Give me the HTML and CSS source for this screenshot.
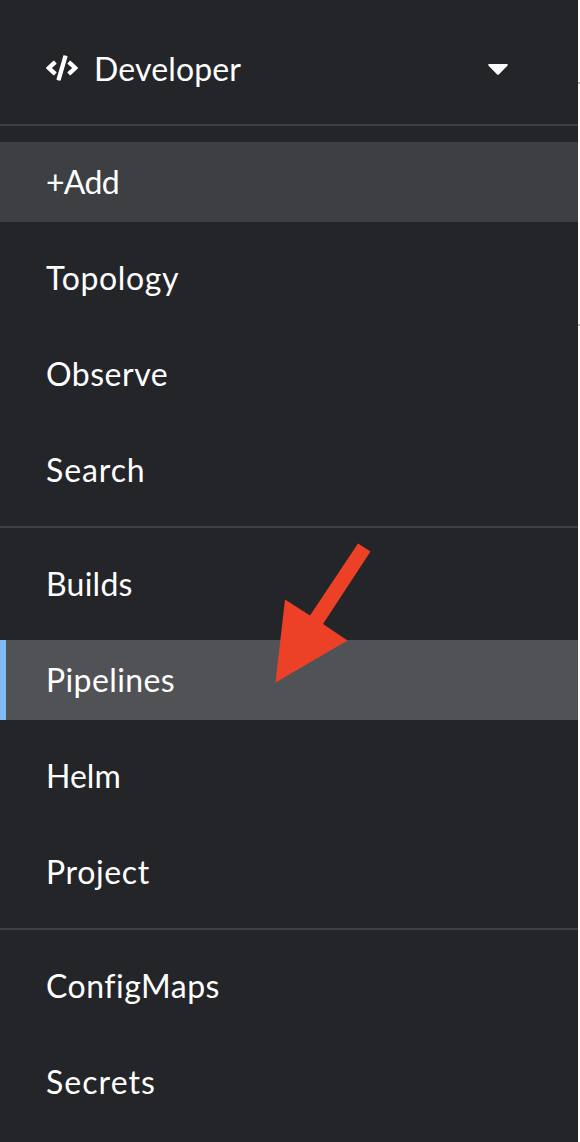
FILE: index.html
```html
<!DOCTYPE html>
<html lang="en">
<head>
<meta charset="utf-8">
<title>Developer navigation</title>
<link rel="stylesheet" href="styles.css">
</head>
<body>
<div class="page">
  <nav class="sidebar">
    <button class="perspective" type="button">
      <svg class="code-icon" viewBox="0 0 640 512"><path fill="currentColor" d="M278.900 511.500l-61-17.700c-6.400-1.800-10-8.500-8.200-14.900L346.200 8.700c1.800-6.400 8.500-10 14.900-8.200l61 17.700c6.400 1.800 10 8.500 8.200 14.900L293.800 503.300c-1.900 6.400-8.500 10.100-14.900 8.200zm-114-112.200l43.500-46.400c4.600-4.900 4.300-12.700-.8-17.200L117 256l90.600-79.700c5.100-4.500 5.500-12.300.8-17.200l-43.500-46.400c-4.500-4.800-12.100-5.100-17-.5L3.800 247.200c-5.100 4.700-5.100 12.800 0 17.500l144.100 135.100c4.900 4.600 12.500 4.400 17-.5zm327.200.6l144.100-135.100c5.100-4.700 5.100-12.800 0-17.500L492.100 112.100c-4.800-4.500-12.400-4.300-17 .5L431.600 159c-4.600 4.900-4.300 12.700.8 17.200L523 256l-90.600 79.700c-5.100 4.500-5.500 12.300-.8 17.200l43.500 46.400c4.500 4.900 12.100 5.100 17 .6z"/></svg>
      <span class="label t-developer">Developer</span>
      <svg class="caret" viewBox="0 0 20 12"><path fill="currentColor" d="M1.200 0h17.600q1.600.4.600 1.800L10.800 10.500q-.8.800-1.600 0L.6 1.800Q-.4.400 1.200 0z"/></svg>
    </button>
    <ul class="group">
      <li class="item hovered"><span class="label t-add">+Add</span></li>
      <li class="item"><span class="label t-topology">Topology</span></li>
      <li class="item"><span class="label">Observe</span></li>
      <li class="item"><span class="label t-search">Search</span></li>
    </ul>
    <ul class="group">
      <li class="item"><span class="label t-builds">Builds</span></li>
      <li class="item current"><span class="label t-pipelines">Pipelines</span></li>
      <li class="item"><span class="label t-helm">Helm</span></li>
      <li class="item"><span class="label t-project">Project</span></li>
    </ul>
    <ul class="group">
      <li class="item"><span class="label">ConfigMaps</span></li>
      <li class="item"><span class="label t-secrets">Secrets</span></li>
    </ul>
  </nav>
  <div class="content-edge"></div>
  <svg class="arrow" viewBox="0 0 96 140"><path fill="#ec4127" d="M83 0.500L95.500 8.500L48 81L72.500 97.500L0.500 139.500L10 56.500L35 72.500z"/></svg>
</div>
</body>
</html>
```
FILE: styles.css
```css
* { box-sizing: border-box; }
body { margin: 0; }
.page {
  position: relative;
  display: flex;
  width: 580px;
  height: 1142px;
  overflow: hidden;
  background: #fff;
  font-family: Lato, "Open Sans", sans-serif;
  font-size: 32px;
  line-height: 48px;
  color: #fff;
}
.sidebar { width: 578px; background: #242529; }
.perspective {
  display: flex;
  align-items: center;
  width: 100%;
  height: 124px;
  padding: 14px 70px 0 46px;
  border: 0;
  background: none;
  color: inherit;
  font: inherit;
}
.code-icon { width: 32px; height: 26px; margin: -2px 16px 0 0; }
.caret { width: 20px; height: 12px; margin: 2px 0 0 auto; }
.group {
  display: flex;
  flex-direction: column;
  gap: 16px;
  margin: 0;
  padding: 16px 0;
  border-top: 2px solid #3e3f43;
  list-style: none;
}
.item { height: 80px; padding: 16px 46px; }
.label { white-space: nowrap; letter-spacing: 0.5px; }
.t-developer { letter-spacing: 0.15px; }
.t-add { letter-spacing: -0.7px; }
.t-topology { letter-spacing: 0.65px; }
.t-search { letter-spacing: 0.9px; }
.t-builds { letter-spacing: 0.25px; }
.t-pipelines { letter-spacing: 0.4px; }
.t-helm { letter-spacing: 0; }
.t-project { letter-spacing: 0.65px; }
.t-secrets { letter-spacing: 1.05px; }
.hovered { background: #3e3f43; }
.current { padding-left: 40px; border-left: 6px solid #81bbf3; background: #515256; }
.content-edge {
  width: 2px;
  background:
    linear-gradient(#c7c7c7, #c7c7c7) 0 82px / 2px 2px no-repeat,
    linear-gradient(#c7c7c7, #c7c7c7) 0 324px / 2px 2px no-repeat,
    #fff;
}
.arrow { position: absolute; left: 275px; top: 543px; width: 96px; height: 140px; }
```
